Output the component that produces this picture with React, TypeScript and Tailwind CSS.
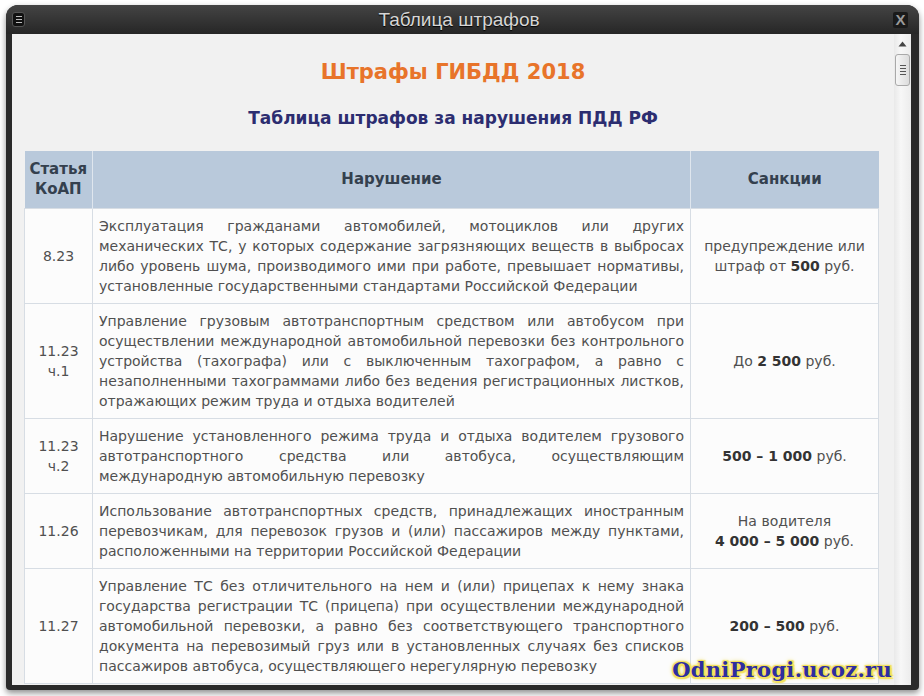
import React from "react";

type Row = {
  code: string[];
  lines: string[];
  sanction: React.ReactNode;
};

const rows: Row[] = [
  {
    code: ["8.23"],
    lines: [
      "Эксплуатация гражданами автомобилей, мотоциклов или других",
      "механических ТС, у которых содержание загрязняющих веществ в выбросах",
      "либо уровень шума, производимого ими при работе, превышает нормативы,",
      "установленные государственными стандартами Российской Федерации",
    ],
    sanction: (
      <>
        предупреждение или
        <br />
        штраф от <b className="text-[#333]">500</b> руб.
      </>
    ),
  },
  {
    code: ["11.23", "ч.1"],
    lines: [
      "Управление грузовым автотранспортным средством или автобусом при",
      "осуществлении международной автомобильной перевозки без контрольного",
      "устройства (тахографа) или с выключенным тахографом, а равно с",
      "незаполненными тахограммами либо без ведения регистрационных листков,",
      "отражающих режим труда и отдыха водителей",
    ],
    sanction: (
      <>
        До <b className="text-[#333]">2 500</b> руб.
      </>
    ),
  },
  {
    code: ["11.23", "ч.2"],
    lines: [
      "Нарушение установленного режима труда и отдыха водителем грузового",
      "автотранспортного средства или автобуса, осуществляющим",
      "международную автомобильную перевозку",
    ],
    sanction: (
      <>
        <b className="text-[#333]">500 – 1 000</b> руб.
      </>
    ),
  },
  {
    code: ["11.26"],
    lines: [
      "Использование автотранспортных средств, принадлежащих иностранным",
      "перевозчикам, для перевозок грузов и (или) пассажиров между пунктами,",
      "расположенными на территории Российской Федерации",
    ],
    sanction: (
      <>
        На водителя
        <br />
        <b className="text-[#333]">4 000 – 5 000</b> руб.
      </>
    ),
  },
  {
    code: ["11.27"],
    lines: [
      "Управление ТС без отличительного на нем и (или) прицепах к нему знака",
      "государства регистрации ТС (прицепа) при осуществлении международной",
      "автомобильной перевозки, а равно без соответствующего транспортного",
      "документа на перевозимый груз или в установленных случаях без списков",
      "пассажиров автобуса, осуществляющего нерегулярную перевозку",
    ],
    sanction: (
      <>
        <b className="text-[#333]">200 – 500</b> руб.
      </>
    ),
  },
];

// justified text with the same line breaks as the source page
const Justified = ({ lines }: { lines: string[] }) => (
  <div>
    {lines.map((l, i) => (
      <div
        key={i}
        className={
          i < lines.length - 1 ? "text-justify [text-align-last:justify]" : "text-left"
        }
      >
        {l}
      </div>
    ))}
  </div>
);

const ScrollBar = () => (
  <div className="w-[17px] shrink-0 bg-[linear-gradient(90deg,#e9e9e9,#f7f7f7_40%,#ececec)] flex flex-col items-center pt-[7px]">
    <svg width="9" height="6" viewBox="0 0 9 6">
      <path d="M4.5 0.5 L8.5 5.5 L0.5 5.5 Z" fill="#444" />
    </svg>
    <div className="mt-[7px] w-[15px] h-[32px] rounded-[3px] border border-[#a9a9a9] bg-[linear-gradient(90deg,#f6f6f6,#dcdcdc)] flex flex-col items-center justify-center gap-[2px]">
      <div className="w-[6px] h-[1px] bg-[#555]" />
      <div className="w-[6px] h-[1px] bg-[#555]" />
      <div className="w-[6px] h-[1px] bg-[#555]" />
      <div className="w-[6px] h-[1px] bg-[#555]" />
    </div>
  </div>
);

export default function App() {
  return (
    <div className="w-[924px] h-[696px] bg-white overflow-hidden relative font-['DejaVu_Sans',sans-serif]">
      <div className="ml-[6px] mt-[5px] w-[913px] h-[685px] rounded-t-[12px] rounded-b-[4px] bg-[#2a2a2a] shadow-[0_3px_6px_rgba(0,0,0,0.45)] flex flex-col">
        {/* title bar */}
        <div className="h-[29px] shrink-0 rounded-t-[12px] bg-[linear-gradient(180deg,#444,#262626)] flex items-center px-[6px]">
          <div className="w-[13px] h-[15px] rounded-[3px] bg-[#111] border border-[#555] flex flex-col items-center justify-center gap-[2px]">
            <div className="w-[6px] h-[1px] bg-[#bbb]" />
            <div className="w-[6px] h-[1px] bg-[#bbb]" />
            <div className="w-[6px] h-[1px] bg-[#bbb]" />
          </div>
          <div className="flex-1 text-center text-[19px] leading-none text-[#d6d6d6] font-['Liberation_Sans_Narrow','Liberation_Sans',sans-serif] [text-shadow:0_1px_1px_#000]">
            Таблица штрафов
          </div>
          <div className="w-[15px] h-[16px] mr-[5px] rounded-[2px] bg-[#1a1a1a] flex items-center justify-center text-[15px] font-bold leading-none text-[#9a9a9a] font-['Liberation_Sans',sans-serif]">
            X
          </div>
        </div>

        {/* body */}
        <div className="flex flex-1 min-h-0 pl-[6px] pr-[8px] pb-[5px]">
          <div className="flex-1 min-w-0 bg-[#f1f1f1] overflow-hidden relative">
            <div className="pt-[24px] text-center text-[21px] leading-[28px] font-bold text-[#e8742a]">
              Штрафы ГИБДД 2018
            </div>
            <div className="mt-[20px] text-center text-[17px] leading-[24px] font-bold text-[#2c2d70]">
              Таблица штрафов за нарушения ПДД РФ
            </div>
            <div className="mt-[21px] ml-[12px] w-[854px]">
              <table className="w-full table-fixed border-collapse text-[14px] leading-[20px] text-[#505050]">
                <colgroup>
                  <col className="w-[68px]" />
                  <col className="w-[598px]" />
                  <col className="w-[188px]" />
                </colgroup>
                <thead>
                  <tr className="bg-[#b9c9db] text-[#34404e] font-bold text-[15px]">
                    <th className="h-[57px] border-r border-[#dfe6ee] text-center font-bold">
                      Статья
                      <br />
                      КоАП
                    </th>
                    <th className="border-r border-[#dfe6ee] text-center font-bold">Нарушение</th>
                    <th className="text-center font-bold">Санкции</th>
                  </tr>
                </thead>
                <tbody>
                  {rows.map((r, i) => (
                    <tr key={i} className="bg-[#fcfcfc]">
                      <td className="border border-[#d7dde4] text-center align-middle py-[7px]">
                        {r.code.map((c) => (
                          <div key={c}>{c}</div>
                        ))}
                      </td>
                      <td className="border border-[#d7dde4] align-middle py-[7px] pl-[6px] pr-[6px]">
                        <Justified lines={r.lines} />
                      </td>
                      <td className="border border-[#d7dde4] text-center align-middle py-[7px]">
                        {r.sanction}
                      </td>
                    </tr>
                  ))}
                </tbody>
              </table>
            </div>

            {/* watermark */}
            <div className="absolute right-[2px] bottom-[5px] text-[21px] leading-none font-bold text-[#2e2da0] font-['DejaVu_Serif',serif] tracking-[0.3px] [text-shadow:0_0_2px_#f3e15a,2px_2px_1px_#f3e15a,-1px_-1px_1px_#f3e15a,2px_-1px_1px_#f3e15a,-1px_2px_1px_#f3e15a,0_0_5px_#e8d54a]">
              OdniProgi.ucoz.ru
            </div>
          </div>
          <ScrollBar />
        </div>
      </div>
    </div>
  );
}
